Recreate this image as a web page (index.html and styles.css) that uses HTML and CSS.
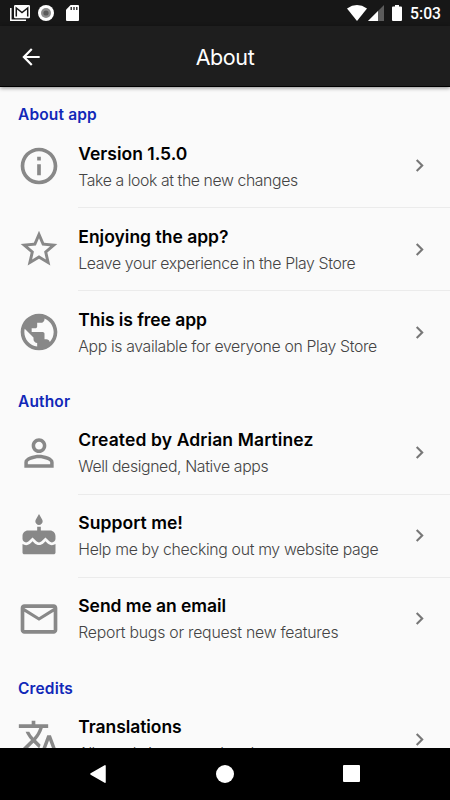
FILE: index.html
```html
<!DOCTYPE html>
<html lang="en">
<head>
<meta charset="utf-8">
<title>About</title>
<link rel="stylesheet" href="styles.css">
</head>
<body>
<div class="screen">
  <div class="status">
    <div class="status-left">
      <svg width="20" height="16" viewBox="0 0 20 16"><path d="M.8 3v12.200H16" fill="none" stroke="#fff" stroke-width="1.500"/><rect x="4" y="0" width="16" height="13.200" rx="1.200" fill="#fff"/><path d="M6.300 11.500V3l5.700 4.500L17.700 3v8.500" fill="none" stroke="#171717" stroke-width="1.500"/></svg>
      <svg width="16" height="16" viewBox="0 0 16 16"><circle cx="8" cy="8" r="8" fill="#fff"/><circle cx="8" cy="8" r="5" fill="#8e8e8e"/><circle cx="8" cy="8" r="2.600" fill="#5c5c5c"/></svg>
      <svg class="sd" width="13" height="16" viewBox="0 0 13 16"><path d="M4.600 0H12a1 1 0 0 1 1 1v14a1 1 0 0 1-1 1H1a1 1 0 0 1-1-1V4.700z" fill="#fff"/><path d="M5.200 2v3M8 2v3M10.800 2v3" stroke="#171717" stroke-width="1.300"/></svg>
    </div>
    <div class="status-right">
      <svg width="20" height="16" viewBox="0 0 20 16"><path d="M0 3.400Q10-3.400 20 3.400L10 16z" fill="#fff"/></svg>
      <svg class="cell" width="16" height="16" viewBox="0 0 16 16"><path d="M16 0v16H0z" fill="#5c5c5c"/><path d="M10 6v10H0z" fill="#fff"/></svg>
      <svg class="battery" width="10" height="16" viewBox="0 0 10 16"><path d="M3 0h4v1.500h2q1 0 1 1V15q0 1-1 1H1q-1 0-1-1V2.500q0-1 1-1h2z" fill="#fff"/></svg>
      <span class="clock">5:03</span>
    </div>
  </div>
  <header class="bar">
    <svg class="back" width="26" height="26" viewBox="0 0 24 24"><path d="M20 11H7.830l5.590-5.590L12 4l-8 8 8 8 1.410-1.410L7.830 13H20z" fill="#fff"/></svg>
    <h1><span>About</span></h1>
  </header>
  <main>
    <section>
      <h2><span class="h-app">About app</span></h2>
      <div class="row">
        <svg class="icon" viewBox="0 0 24 24"><path d="M11 7h2v2h-2zm0 4h2v6h-2zm1-9C6.480 2 2 6.480 2 12s4.480 10 10 10 10-4.480 10-10S17.520 2 12 2zm0 18c-4.410 0-8-3.590-8-8s3.590-8 8-8 8 3.590 8 8-3.590 8-8 8z"/></svg>
        <div class="body"><div class="text"><h3><span class="t1">Version 1.5.0</span></h3><p><span class="s1">Take a look at the new changes</span></p></div>
        <svg class="chev" viewBox="0 0 24 24"><path d="M10 6 8.590 7.410 13.170 12l-4.580 4.590L10 18l6-6z"/></svg></div>
      </div>
      <div class="row">
        <svg class="icon" viewBox="0 0 24 24"><path d="M22 9.240l-7.190-.62L12 2 9.190 8.630 2 9.240l5.460 4.730L5.820 21 12 17.270 18.180 21l-1.630-7.030L22 9.240zM12 15.400l-3.760 2.270 1-4.280-3.320-2.880 4.380-.38L12 6.100l1.710 4.040 4.380.38-3.320 2.880 1 4.280L12 15.400z"/></svg>
        <div class="body"><div class="text"><h3><span class="t2">Enjoying the app?</span></h3><p><span class="s2">Leave your experience in the Play Store</span></p></div>
        <svg class="chev" viewBox="0 0 24 24"><path d="M10 6 8.590 7.410 13.170 12l-4.580 4.590L10 18l6-6z"/></svg></div>
      </div>
      <div class="row">
        <svg class="icon" viewBox="0 0 24 24"><path d="M12 2C6.480 2 2 6.480 2 12s4.480 10 10 10 10-4.480 10-10S17.520 2 12 2zm-1 17.930c-3.950-.49-7-3.850-7-7.930 0-.62.080-1.210.21-1.790L9 15v1c0 1.100.9 2 2 2v1.930zm6.900-2.540c-.26-.81-1-1.390-1.900-1.390h-1v-3c0-.55-.45-1-1-1H8v-2h2c.55 0 1-.45 1-1V7h2c1.100 0 2-.9 2-2v-.41c2.930 1.190 5 4.060 5 7.410 0 2.080-.8 3.970-2.100 5.390z"/></svg>
        <div class="body"><div class="text"><h3><span class="t3">This is free app</span></h3><p><span class="s3">App is available for everyone on Play Store</span></p></div>
        <svg class="chev" viewBox="0 0 24 24"><path d="M10 6 8.590 7.410 13.170 12l-4.580 4.590L10 18l6-6z"/></svg></div>
      </div>
    </section>
    <section>
      <h2><span class="h-author">Author</span></h2>
      <div class="row">
        <svg class="icon" viewBox="0 0 24 24"><path d="M12 5.900c1.160 0 2.100.94 2.100 2.100s-.94 2.100-2.100 2.100S9.900 9.160 9.900 8s.94-2.100 2.100-2.100m0 9c2.970 0 6.100 1.460 6.100 2.100v1.100H5.900V17c0-.64 3.130-2.100 6.100-2.100M12 4C9.790 4 8 5.790 8 8s1.790 4 4 4 4-1.790 4-4-1.790-4-4-4zm0 9c-2.670 0-8 1.340-8 4v3h16v-3c0-2.660-5.330-4-8-4z"/></svg>
        <div class="body"><div class="text"><h3><span class="t4">Created by Adrian Martinez</span></h3><p><span class="s4">Well designed, Native apps</span></p></div>
        <svg class="chev" viewBox="0 0 24 24"><path d="M10 6 8.590 7.410 13.170 12l-4.580 4.590L10 18l6-6z"/></svg></div>
      </div>
      <div class="row">
        <svg class="icon" viewBox="0 0 24 24"><path d="M12 6c1.110 0 2-.9 2-2 0-.38-.1-.73-.29-1.030L12 0l-1.710 2.970c-.19.3-.29.65-.29 1.030 0 1.100.9 2 2 2zm4.600 9.990l-1.070-1.070-1.080 1.070c-1.300 1.300-3.580 1.310-4.890 0l-1.070-1.070-1.090 1.070C6.750 16.640 5.880 17 4.960 17c-.73 0-1.400-.23-1.960-.61V21c0 .55.45 1 1 1h16c.55 0 1-.45 1-1v-4.610c-.56.38-1.230.61-1.960.61-.92 0-1.790-.36-2.440-1.010zM18 9h-5V7h-2v2H6c-1.660 0-3 1.340-3 3v1.540c0 1.080.88 1.960 1.960 1.960.52 0 1.020-.2 1.380-.57l2.140-2.130 2.130 2.130c.74.74 2.030.74 2.770 0l2.140-2.130 2.130 2.130c.37.37.86.57 1.380.57 1.080 0 1.960-.88 1.960-1.960V12C21 10.340 19.660 9 18 9z"/></svg>
        <div class="body"><div class="text"><h3><span class="t5">Support me!</span></h3><p><span class="s5">Help me by checking out my website page</span></p></div>
        <svg class="chev" viewBox="0 0 24 24"><path d="M10 6 8.590 7.410 13.170 12l-4.580 4.590L10 18l6-6z"/></svg></div>
      </div>
      <div class="row">
        <svg class="icon" viewBox="0 0 24 24"><path d="M20 4H4c-1.100 0-2 .9-2 2v12c0 1.100.9 2 2 2h16c1.100 0 2-.9 2-2V6c0-1.100-.9-2-2-2zm0 14H4V8l8 5 8-5v10zm-8-7L4 6h16l-8 5z"/></svg>
        <div class="body"><div class="text"><h3><span class="t6">Send me an email</span></h3><p><span class="s6">Report bugs or request new features</span></p></div>
        <svg class="chev" viewBox="0 0 24 24"><path d="M10 6 8.590 7.410 13.170 12l-4.580 4.590L10 18l6-6z"/></svg></div>
      </div>
    </section>
    <section>
      <h2><span class="h-credits">Credits</span></h2>
      <div class="row">
        <svg class="icon" viewBox="0 0 24 24"><path d="M12.870 15.070l-2.540-2.510.03-.03c1.740-1.940 2.980-4.170 3.710-6.530H17V4h-7V2H8v2H1v1.990h11.170C11.500 7.920 10.440 9.750 9 11.350 8.070 10.320 7.300 9.190 6.690 8h-2c.73 1.630 1.730 3.170 2.980 4.560l-5.090 5.020L4 19l5-5 3.110 3.110.76-2.040zM18.500 10h-2L12 22h2l1.120-3h4.750L21 22h2l-4.500-12zm-2.620 7l1.620-4.330L19.120 17h-3.240z"/></svg>
        <div class="body"><div class="text"><h3><span class="t7">Translations</span></h3><p><span class="s7">All translations completed</span></p></div>
        <svg class="chev" viewBox="0 0 24 24"><path d="M10 6 8.590 7.410 13.170 12l-4.580 4.590L10 18l6-6z"/></svg></div>
      </div>
    </section>
  </main>
  <nav>
    <svg width="16" height="18" viewBox="0 0 16 18"><path d="M15 .8v16.400L1 9z" fill="#fff" stroke="#fff" stroke-width="1.500" stroke-linejoin="round"/></svg>
    <svg width="18" height="18" viewBox="0 0 18 18"><circle cx="9" cy="9" r="9" fill="#fff"/></svg>
    <svg width="17" height="17" viewBox="0 0 17 17"><rect width="17" height="17" rx="1" fill="#fff"/></svg>
  </nav>
</div>
</body>
</html>
```
FILE: styles.css
```css
* { box-sizing: border-box; margin: 0; padding: 0; }
body { width: 450px; height: 800px; overflow: hidden; font-family: Inter, sans-serif; background: #fafafa; }
svg { display: block; flex: none; }
.screen { height: 800px; display: flex; flex-direction: column; }
.status { height: 26px; flex: none; background: #171717; display: flex; justify-content: space-between; padding: 5px 9px 0 10px; }
.status-left, .status-right { display: flex; align-items: flex-start; }
.status-left { gap: 8px; }
.sd { margin-left: 4px; }
.cell { margin-left: 1px; }
.battery { margin-left: 8px; }
.clock { font: 500 15.700px/18px Roboto, sans-serif; color: #fff; margin-left: 8px; }
.bar { height: 61px; flex: none; background: #1e1e1e; border-bottom: 1px solid #000; box-shadow: 0 1px 4px rgba(0,0,0,.45); display: grid; grid-template-columns: 62px 1fr 62px; align-items: center; z-index: 1; }
.back { margin: 1px 0 0 18px; }
h1 { font-weight: 400; font-size: 21.500px; letter-spacing: -.4px; color: #fff; text-align: center; line-height: 60px; padding-top: 1px; }
main { flex: 1; min-height: 0; overflow: hidden; padding-top: .6px; }
h2 { height: 37.250px; padding: 15.700px 0 0 18px; font-size: 15.500px; line-height: 24px; font-weight: 600; color: #1128b8; letter-spacing: .15px; }
.row { height: 83.150px; display: flex; padding-left: 17px; }
.icon { width: 44px; height: 44px; margin: 19.100px 17.300px 0 0; fill: #888; }
.body { flex: 1; display: flex; border-bottom: 1px solid #ebebeb; }
.row:last-child .body { border-bottom: 0; }
.text { flex: 1; padding-top: 15.700px; white-space: nowrap; }
h3 { font-size: 17.500px; line-height: 26px; font-weight: 600; color: #000; }
p { font-size: 15.800px; line-height: 28px; font-weight: 300; color: #444; }
.t3 { letter-spacing: -.08px; }
.t4 { letter-spacing: .12px; }
.t5 { letter-spacing: .05px; }
.t6, .t7 { letter-spacing: -.06px; }
.s1 { letter-spacing: -.4px; }
.s2, .s4 { letter-spacing: -.36px; }
.s3 { letter-spacing: -.35px; }
.s5 { letter-spacing: -.32px; }
.s6 { letter-spacing: -.24px; }
.s7 { letter-spacing: -.5px; }
.chev { width: 25px; height: 25px; margin: 28.600px 18px 0 0; fill: #777; }
nav { height: 52.500px; flex: none; background: #000; display: flex; justify-content: space-between; align-items: center; padding: 0 90px; }
```
